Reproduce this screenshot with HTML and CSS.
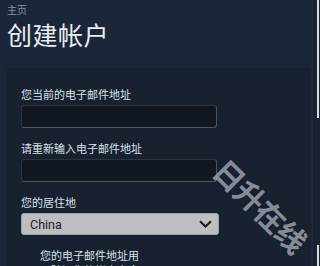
FILE: index.html
```html
<!DOCTYPE html>
<html lang="zh">
<head>
<meta charset="utf-8">
<link rel="stylesheet" href="styles.css">
</head>
<body>
<div class="page">
  <div class="main">
    <div class="crumb">主页</div>
    <h1 class="title">创建帐户</h1>
    <div class="panel">
      <label class="label">您当前的电子邮件地址</label>
      <div class="input"></div>
      <label class="label">请重新输入电子邮件地址</label>
      <div class="input"></div>
      <label class="label">您的居住地</label>
      <div class="select"><span>China</span>
        <svg class="chev" width="13" height="8" viewBox="0 0 13 8"><path d="M1 1.2 L6.5 6.5 L12 1.2" fill="none" stroke="#1a1a1a" stroke-width="2"/></svg>
      </div>
      <p class="note">您的电子邮件地址用<br>于验证您的帐户安全</p>
    </div>
  </div>
  <div class="side">
    <div class="bar top"></div>
    <div class="bar bottom"></div>
  </div>
  <div class="watermark">日升在线</div>
</div>
</body>
</html>
```
FILE: styles.css
```css
* { box-sizing: border-box; }
html, body { margin: 0; padding: 0; }
body {
  background: #1b2535;
  font-family: "Noto Sans CJK SC", "Noto Sans", sans-serif;
  width: 320px;
  height: 266px;
  overflow: hidden;
}
.page {
  display: flex;
  height: 266px;
  position: relative;
  overflow: hidden;
}
.main {
  flex: 1;
  padding: 0 0 0 7px;
  background: #1b2739;
  overflow: hidden;
}
.crumb {
  font-size: 10px;
  line-height: 12px;
  color: #8a94a0;
  padding-top: 4px;
}
.title {
  margin: 4px 0 0;
  font-weight: 400;
  font-size: 25px;
  line-height: 28px;
  color: #e8eef3;
  letter-spacing: 0.5px;
}
.panel {
  margin-top: 20px;
  margin-right: 1px;
  background: #172130;
  padding: 19px 14px 0;
  height: 200px;
}
.label {
  display: block;
  font-size: 11px;
  line-height: 14px;
  color: #dbe2e8;
  margin-bottom: 4px;
}
.input {
  width: 196px;
  height: 23px;
  background: #121821;
  border: 1px solid #2c3440;
  border-right-color: #4a5666;
  border-bottom-color: #4a5666;
  border-radius: 3px;
  margin-bottom: 13px;
}
.select {
  width: 198px;
  height: 22px;
  background: #bcbfc1;
  border: 1px solid #9da1a4;
  border-radius: 3px;
  display: flex;
  align-items: center;
  justify-content: space-between;
  padding: 0 6px 0 8px;
  font-family: "Roboto", "Noto Sans", sans-serif;
  font-size: 12.5px;
  color: #1c1c1c;
}
.chev { display: block; }
.note {
  margin: 13px 0 0 19px;
  font-size: 11px;
  line-height: 15px;
  color: #dbe2e8;
}
.side {
  width: 8px;
  display: flex;
  flex-direction: column;
  justify-content: space-between;
  background: #182231;
  border-left: 1px solid #1e2b3c;
}
.bar {
  margin-left: 4px;
  width: 2px;
  background: #d8dde2;
}
.bar.top { height: 118px; }
.bar.bottom { height: 21px; }
.watermark {
  position: absolute;
  left: 203px;
  top: 190px;
  font-size: 30px;
  line-height: 30px;
  font-weight: 700;
  color: rgba(165, 170, 178, 0.8);
  transform: rotate(45deg);
  white-space: nowrap;
  letter-spacing: -1px;
}
```
